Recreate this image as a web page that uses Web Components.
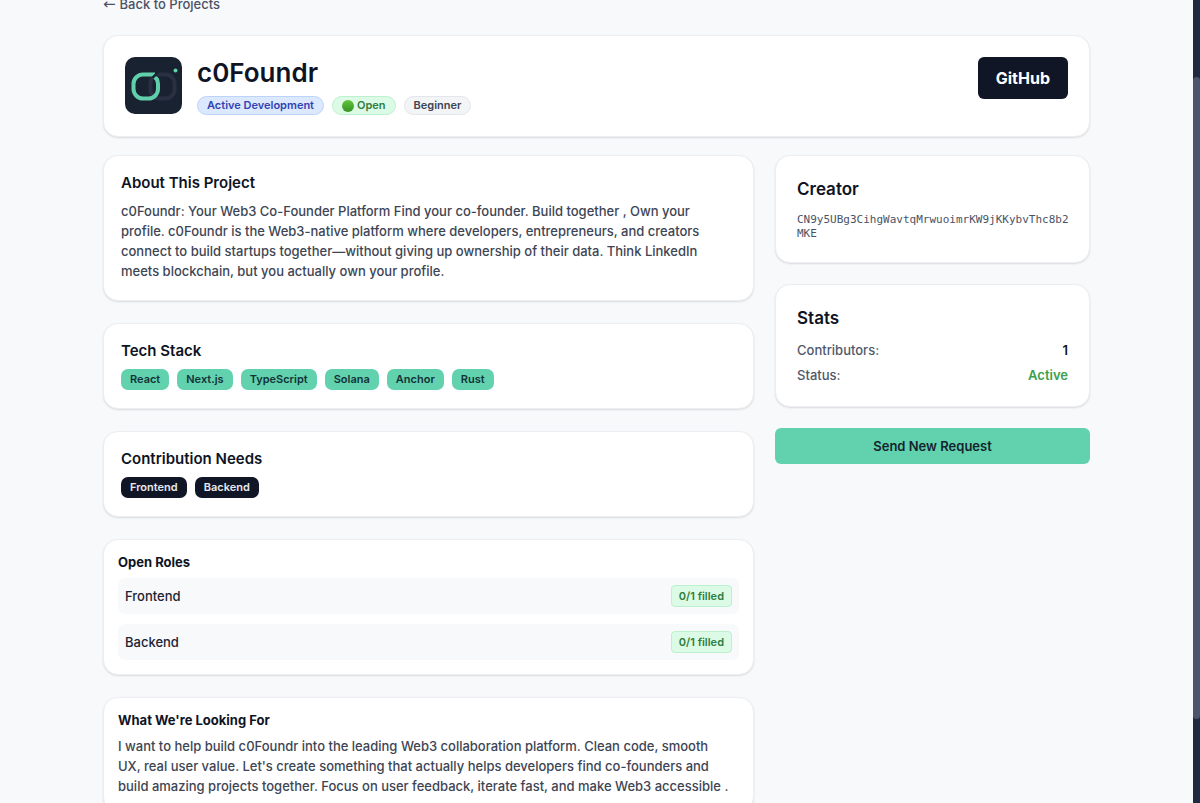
<!DOCTYPE html>
<html lang="en">
<head>
<meta charset="utf-8">
<meta name="viewport" content="width=device-width, initial-scale=1">
<title>c0Foundr</title>
<style>
    html, body {
        margin: 0;
        height: 100%;
    }

    body {
        overflow: hidden;
        background-color: #f8f9fb;
        color: #0f1424;
        font: 500 13px/20px Inter, "Liberation Sans", sans-serif;
    }
</style>
</head>
<body>
<project-page></project-page>

<script>
class BaseElement extends HTMLElement {
    constructor () {
        super();

        this.attachShadow({ mode: 'open' });
    }

    connectedCallback () {
        const template = document.createElement('template');
        template.innerHTML = this.template();
        this.shadowRoot.replaceChildren(template.content.cloneNode(true));
    }
}

class PanelCard extends BaseElement {
    template () {
        return `
        <style>
            :host {
                display: block;
                box-sizing: border-box;
                padding: 17px 17px 18px;
                background-color: #fff;
                border: 1px solid #eceef1;
                border-radius: 15px;
                box-shadow: 0 1px 2px rgba(0, 0, 0, 0.12);
            }

            :host([size="small"]) {
                padding: 14px;
            }

            :host([size="large"]) {
                padding: 21px;
            }

            h2 {
                margin: 0 0 8px;
                font-size: 15px;
                line-height: 20px;
                font-weight: 600;
            }

            :host([size="small"]) h2 {
                font-size: 13px;
                line-height: 16px;
                font-weight: 700;
            }

            :host([size="large"]) h2 {
                margin-bottom: 10px;
                font-size: 17px;
                line-height: 24px;
            }

            ::slotted(p) {
                margin: 0 0 1px;
                padding-right: 8px;
                color: #3d4554;
            }
        </style>
        <h2>${this.getAttribute('heading')}</h2>
        <slot></slot>
        `;
    }
}

class TagList extends BaseElement {
    template () {
        return `
        <style>
            :host {
                display: flex;
                flex-wrap: wrap;
                gap: 8px;
            }
        </style>
        <slot></slot>
        `;
    }
}

class TagItem extends BaseElement {
    template () {
        return `
        <style>
            :host {
                padding: 0 9px;
                background-color: #61d2ad;
                border-radius: 7px;
                color: #14323a;
                font-size: 11px;
                line-height: 21px;
                font-weight: 600;
            }

            :host([dark]) {
                background-color: #111627;
                color: #e6e9ef;
            }
        </style>
        <slot></slot>
        `;
    }
}

class StatusBadge extends BaseElement {
    template () {
        return `
        <style>
            :host {
                display: inline-flex;
                align-items: center;
                gap: 3px;
                padding: 0 9px;
                background-color: #f3f4f6;
                border: 1px solid #e3e6ea;
                border-radius: 10px;
                color: #3d4554;
                font-size: 11px;
                line-height: 17px;
                font-weight: 600;
            }

            :host([tone="blue"]) {
                background-color: #dbe8fd;
                border-color: #bdd4fa;
                color: #3243b4;
            }

            :host([tone="green"]) {
                background-color: #dcfbe6;
                border-color: #bdf0cd;
                color: #2f7d40;
            }

            :host([square]) {
                padding: 0 7px;
                border-radius: 4px;
                line-height: 20px;
            }

            i {
                width: 12px;
                height: 12px;
                border-radius: 50%;
                background: linear-gradient(#62c53c, #379324);
            }
        </style>
        ${this.hasAttribute('dot') ? '<i></i>' : ''}
        <slot></slot>
        `;
    }
}

class ProjectLogo extends BaseElement {
    template () {
        return `
        <style>
            :host {
                flex: none;
                width: 57px;
                height: 57px;
            }

            svg {
                display: block;
            }
        </style>
        <svg width="57" height="57" viewBox="0 0 57 57" fill="none" aria-hidden="true">
            <rect width="57" height="57" rx="10" fill="#192231"/>
            <rect x="25.5" y="17.500" width="24" height="24" rx="9" stroke="#2a3042" stroke-width="4"/>
            <path d="M30 17.500H18a9.500 9.500 0 0 0-9.500 9.500v5a9.500 9.500 0 0 0 9.500 9.500h5.500a9.500 9.500 0 0 0 9.500-9.500v-5c0-2.500-.6-4.300-2-6" stroke="#62cfab" stroke-width="4"/>
            <path d="M26.500 20l4.500-4.500h3l-5 6z" fill="#192231"/>
            <path d="M28.500 21.500l2.600-2.600 3 3-2.200 3z" fill="#62cfab"/>
            <circle cx="50.500" cy="13.500" r="2" fill="#62cfab"/>
        </svg>
        `;
    }
}

class ProjectHeader extends BaseElement {
    template () {
        return `
        <style>
            :host {
                display: flex;
                align-items: flex-start;
                gap: 15px;
                padding: 21px;
                background-color: #fff;
                border: 1px solid #eceef1;
                border-radius: 15px;
                box-shadow: 0 1px 2px rgba(0, 0, 0, 0.12);
            }

            .info {
                flex: 1;
            }

            h1 {
                margin: 0 0 7px;
                font-size: 26px;
                line-height: 32px;
                font-weight: 600;
            }

            .badges {
                display: flex;
                flex-wrap: wrap;
                gap: 8px;
            }

            a {
                padding: 11px 18px;
                background-color: #111627;
                border-radius: 6px;
                color: #fff;
                font-size: 16px;
                font-weight: 700;
                text-decoration: none;
            }
        </style>
        <project-logo></project-logo>
        <div class="info">
            <h1>${this.getAttribute('name')}</h1>
            <div class="badges"><slot></slot></div>
        </div>
        <a href="#github">GitHub</a>
        `;
    }
}

class RoleRow extends BaseElement {
    template () {
        return `
        <style>
            :host {
                display: flex;
                align-items: center;
                justify-content: space-between;
                padding: 7px;
                background-color: #f8f9fb;
                border-radius: 7px;
                color: #1c2333;
            }

            :host(:not(:last-child)) {
                margin-bottom: 10px;
            }
        </style>
        <slot></slot>
        <status-badge tone="green" square>${this.getAttribute('filled')} filled</status-badge>
        `;
    }
}

class StatRow extends BaseElement {
    template () {
        return `
        <style>
            :host {
                display: flex;
                justify-content: space-between;
                color: #4f586a;
            }

            :host(:not(:last-child)) {
                margin-bottom: 5px;
            }

            b {
                font-weight: 600;
                color: #0f1424;
            }

            :host([tone="green"]) b {
                color: #3c9f4c;
            }
        </style>
        <span>${this.getAttribute('label')}:</span>
        <b><slot></slot></b>
        `;
    }
}

class WalletAddress extends BaseElement {
    template () {
        return `
        <style>
            :host {
                display: block;
                margin-right: -4px;
                padding-top: 2px;
                color: #4a5365;
                font: 400 11px/14px "DejaVu Sans Mono", monospace;
                word-break: break-all;
            }
        </style>
        <slot></slot>
        `;
    }
}

class RequestButton extends BaseElement {
    template () {
        return `
        <style>
            :host {
                display: block;
            }

            button {
                display: block;
                width: 100%;
                padding: 8px;
                background-color: #61d2ad;
                border: none;
                border-radius: 6px;
                color: #14242e;
                font: inherit;
                font-weight: 600;
                cursor: pointer;
            }
        </style>
        <button type="button"><slot></slot></button>
        `;
    }
}

class ScrollTrack extends BaseElement {
    template () {
        return `
        <style>
            :host {
                box-sizing: border-box;
                flex: none;
                width: 7px;
                padding-top: 77px;
                background-color: #1e2a3f;
            }

            div {
                height: 80vh;
                background-color: #4a566b;
                border-radius: 4px;
            }
        </style>
        <div></div>
        `;
    }
}

class ProjectPage extends BaseElement {
    template () {
        return `
        <style>
            :host {
                display: flex;
                height: 100vh;
                overflow: hidden;
            }

            main {
                flex: 1;
                min-width: 0;
            }

            .container {
                max-width: 987px;
                margin: 0 auto;
            }

            .back {
                display: flex;
                gap: 4px;
                width: fit-content;
                margin: -6px 0 21px;
                color: #4a5365;
                text-decoration: none;
            }

            .back span {
                font: 400 15px/20px "DejaVu Sans", sans-serif;
            }

            .columns {
                display: grid;
                grid-template-columns: repeat(3, 1fr);
                align-items: start;
                gap: 21px;
                margin-top: 18px;
            }

            .details, .side {
                display: flex;
                flex-direction: column;
                gap: 22px;
            }

            .details {
                grid-column: span 2;
            }

            .side {
                gap: 21px;
            }
        </style>
        <main>
            <div class="container">
                <a class="back" href="#projects"><span>←</span> Back to Projects</a>
                <project-header name="c0Foundr">
                    <status-badge tone="blue">Active Development</status-badge>
                    <status-badge tone="green" dot>Open</status-badge>
                    <status-badge>Beginner</status-badge>
                </project-header>
                <div class="columns">
                    <div class="details">
                        <panel-card heading="About This Project">
                            <p>c0Foundr: Your Web3 Co-Founder Platform Find your co-founder. Build together , Own your profile. c0Foundr is the Web3-native platform where developers, entrepreneurs, and creators connect to build startups together—without giving up ownership of their data. Think LinkedIn meets blockchain, but you actually own your profile.</p>
                        </panel-card>
                        <panel-card heading="Tech Stack">
                            <tag-list>
                                <tag-item>React</tag-item>
                                <tag-item>Next.js</tag-item>
                                <tag-item>TypeScript</tag-item>
                                <tag-item>Solana</tag-item>
                                <tag-item>Anchor</tag-item>
                                <tag-item>Rust</tag-item>
                            </tag-list>
                        </panel-card>
                        <panel-card heading="Contribution Needs">
                            <tag-list>
                                <tag-item dark>Frontend</tag-item>
                                <tag-item dark>Backend</tag-item>
                            </tag-list>
                        </panel-card>
                        <panel-card size="small" heading="Open Roles">
                            <role-row filled="0/1">Frontend</role-row>
                            <role-row filled="0/1">Backend</role-row>
                        </panel-card>
                        <panel-card size="small" heading="What We're Looking For">
                            <p>I want to help build c0Foundr into the leading Web3 collaboration platform. Clean code, smooth UX, real user value. Let's create something that actually helps developers find co-founders and build amazing projects together. Focus on user feedback, iterate fast, and make Web3 accessible .</p>
                        </panel-card>
                    </div>
                    <div class="side">
                        <panel-card size="large" heading="Creator">
                            <wallet-address>CN9y5UBg3CihgWavtqMrwuoimrKW9jKKybvThc8b2MKE</wallet-address>
                        </panel-card>
                        <panel-card size="large" heading="Stats">
                            <stat-row label="Contributors">1</stat-row>
                            <stat-row label="Status" tone="green">Active</stat-row>
                        </panel-card>
                        <request-button>Send New Request</request-button>
                    </div>
                </div>
            </div>
        </main>
        <scroll-track></scroll-track>
        `;
    }
}

customElements.define('panel-card', PanelCard);
customElements.define('tag-list', TagList);
customElements.define('tag-item', TagItem);
customElements.define('status-badge', StatusBadge);
customElements.define('project-logo', ProjectLogo);
customElements.define('project-header', ProjectHeader);
customElements.define('role-row', RoleRow);
customElements.define('stat-row', StatRow);
customElements.define('wallet-address', WalletAddress);
customElements.define('request-button', RequestButton);
customElements.define('scroll-track', ScrollTrack);
customElements.define('project-page', ProjectPage);
</script>
</body>
</html>
